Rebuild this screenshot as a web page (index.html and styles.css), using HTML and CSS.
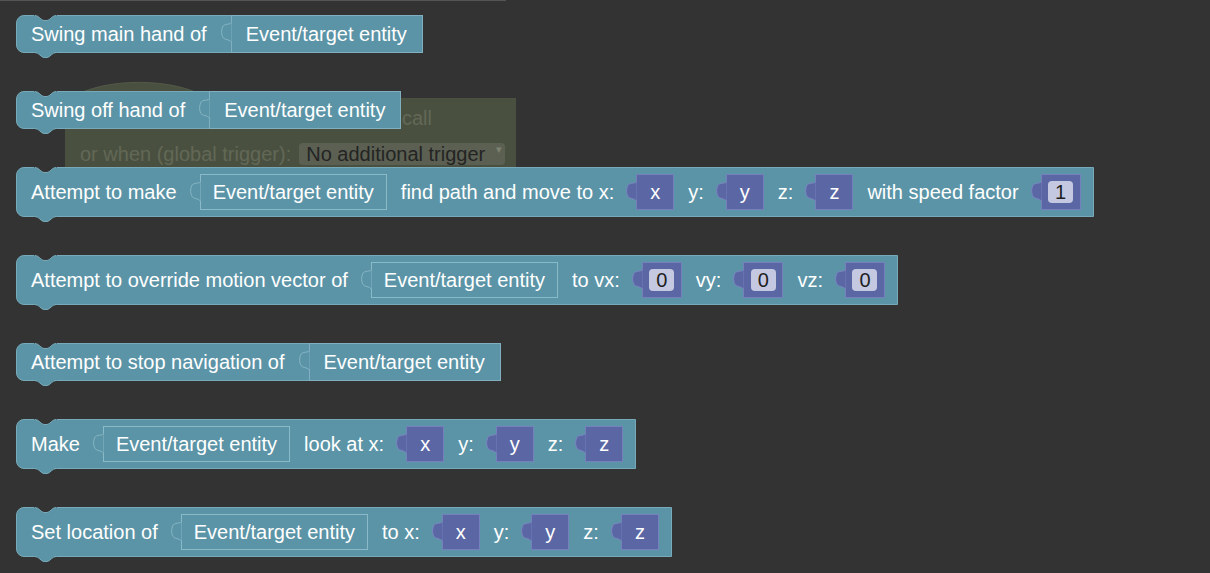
FILE: index.html
```html
<!DOCTYPE html>
<html>
<head>
<meta charset="utf-8">
<link rel="stylesheet" href="styles.css">
</head>
<body>
<div class="workspace">
  <div class="scrollbar"></div>

  <div class="ghost">
    <svg class="ghost-hat" viewBox="0 0 136 18"><path d="M0,17.5 C30,-4 106,-4 136,17.5"/></svg>
    <div class="ghost-row ghost-row1"><span>call</span></div>
    <div class="ghost-row ghost-row2">
      <span>or when (global trigger):</span>
      <span class="dropdown">No additional trigger<span class="arrow">▾</span></span>
    </div>
  </div>

  <div class="stack">
    <div class="block short">
      <svg class="notch" viewBox="0 0 23 7"><path class="cut" d="M0,0 H23 V0.5 H22 C18,0.5 16,5.5 13,5.5 H10 C7,5.5 5,0.5 1,0.5 H0 Z"/><path class="edge" d="M1,0.5 C5,0.5 7,5.5 10,5.5 H13 C16,5.5 18,0.5 22,0.5"/></svg>
      <span class="lbl">Swing main hand of</span>
      <div class="child-flush"><svg class="ctab" viewBox="0 0 12 21"><path d="M11.5,0.5 C11.5,3 4,1 2.5,5 C1,9 1.5,13 3,15.5 C4.5,18 9,17 11.5,20"/></svg><span>Event/target entity</span></div>
      <svg class="ptab" viewBox="0 0 23 7"><path class="fill" d="M0,0 H23 V0.5 H22 C18,0.5 16,5.5 13,5.5 H10 C7,5.5 5,0.5 1,0.5 H0 Z"/><path class="edge" d="M1,0.5 C5,0.5 7,5.5 10,5.5 H13 C16,5.5 18,0.5 22,0.5"/></svg>
    </div>

    <div class="block short">
      <svg class="notch" viewBox="0 0 23 7"><path class="cut" d="M0,0 H23 V0.5 H22 C18,0.5 16,5.5 13,5.5 H10 C7,5.5 5,0.5 1,0.5 H0 Z"/><path class="edge" d="M1,0.5 C5,0.5 7,5.5 10,5.5 H13 C16,5.5 18,0.5 22,0.5"/></svg>
      <span class="lbl">Swing off hand of</span>
      <div class="child-flush"><svg class="ctab" viewBox="0 0 12 21"><path d="M11.5,0.5 C11.5,3 4,1 2.5,5 C1,9 1.5,13 3,15.5 C4.5,18 9,17 11.5,20"/></svg><span>Event/target entity</span></div>
      <svg class="ptab" viewBox="0 0 23 7"><path class="fill" d="M0,0 H23 V0.5 H22 C18,0.5 16,5.5 13,5.5 H10 C7,5.5 5,0.5 1,0.5 H0 Z"/><path class="edge" d="M1,0.5 C5,0.5 7,5.5 10,5.5 H13 C16,5.5 18,0.5 22,0.5"/></svg>
    </div>

    <div class="block tall">
      <svg class="notch" viewBox="0 0 23 7"><path class="cut" d="M0,0 H23 V0.5 H22 C18,0.5 16,5.5 13,5.5 H10 C7,5.5 5,0.5 1,0.5 H0 Z"/><path class="edge" d="M1,0.5 C5,0.5 7,5.5 10,5.5 H13 C16,5.5 18,0.5 22,0.5"/></svg>
      <span class="lbl">Attempt to make</span>
      <div class="slot"><svg class="ctab" viewBox="0 0 12 21"><path d="M11.5,0.5 C11.5,3 4,1 2.5,5 C1,9 1.5,13 3,15.5 C4.5,18 9,17 11.5,20"/></svg><span>Event/target entity</span></div>
      <span class="lbl after">find path and move to x:</span>
      <div class="val"><svg class="ctab" viewBox="0 0 12 21"><path d="M11.5,0.5 C11.5,3 4,1 2.5,5 C1,9 1.5,13 3,15.5 C4.5,18 9,17 11.5,20"/></svg><span>x</span></div>
      <span class="lbl after">y:</span>
      <div class="val"><svg class="ctab" viewBox="0 0 12 21"><path d="M11.5,0.5 C11.5,3 4,1 2.5,5 C1,9 1.5,13 3,15.5 C4.5,18 9,17 11.5,20"/></svg><span>y</span></div>
      <span class="lbl after">z:</span>
      <div class="val"><svg class="ctab" viewBox="0 0 12 21"><path d="M11.5,0.5 C11.5,3 4,1 2.5,5 C1,9 1.5,13 3,15.5 C4.5,18 9,17 11.5,20"/></svg><span>z</span></div>
      <span class="lbl after">with speed factor</span>
      <div class="val num"><svg class="ctab" viewBox="0 0 12 21"><path d="M11.5,0.5 C11.5,3 4,1 2.5,5 C1,9 1.5,13 3,15.5 C4.5,18 9,17 11.5,20"/></svg><span class="field">1</span></div>
      <svg class="ptab" viewBox="0 0 23 7"><path class="fill" d="M0,0 H23 V0.5 H22 C18,0.5 16,5.5 13,5.5 H10 C7,5.5 5,0.5 1,0.5 H0 Z"/><path class="edge" d="M1,0.5 C5,0.5 7,5.5 10,5.5 H13 C16,5.5 18,0.5 22,0.5"/></svg>
    </div>

    <div class="block tall">
      <svg class="notch" viewBox="0 0 23 7"><path class="cut" d="M0,0 H23 V0.5 H22 C18,0.5 16,5.5 13,5.5 H10 C7,5.5 5,0.5 1,0.5 H0 Z"/><path class="edge" d="M1,0.5 C5,0.5 7,5.5 10,5.5 H13 C16,5.5 18,0.5 22,0.5"/></svg>
      <span class="lbl">Attempt to override motion vector of</span>
      <div class="slot"><svg class="ctab" viewBox="0 0 12 21"><path d="M11.5,0.5 C11.5,3 4,1 2.5,5 C1,9 1.5,13 3,15.5 C4.5,18 9,17 11.5,20"/></svg><span>Event/target entity</span></div>
      <span class="lbl after">to vx:</span>
      <div class="val num"><svg class="ctab" viewBox="0 0 12 21"><path d="M11.5,0.5 C11.5,3 4,1 2.5,5 C1,9 1.5,13 3,15.5 C4.5,18 9,17 11.5,20"/></svg><span class="field">0</span></div>
      <span class="lbl after">vy:</span>
      <div class="val num"><svg class="ctab" viewBox="0 0 12 21"><path d="M11.5,0.5 C11.5,3 4,1 2.5,5 C1,9 1.5,13 3,15.5 C4.5,18 9,17 11.5,20"/></svg><span class="field">0</span></div>
      <span class="lbl after">vz:</span>
      <div class="val num"><svg class="ctab" viewBox="0 0 12 21"><path d="M11.5,0.5 C11.5,3 4,1 2.5,5 C1,9 1.5,13 3,15.5 C4.5,18 9,17 11.5,20"/></svg><span class="field">0</span></div>
      <svg class="ptab" viewBox="0 0 23 7"><path class="fill" d="M0,0 H23 V0.5 H22 C18,0.5 16,5.5 13,5.5 H10 C7,5.5 5,0.5 1,0.5 H0 Z"/><path class="edge" d="M1,0.5 C5,0.5 7,5.5 10,5.5 H13 C16,5.5 18,0.5 22,0.5"/></svg>
    </div>

    <div class="block short">
      <svg class="notch" viewBox="0 0 23 7"><path class="cut" d="M0,0 H23 V0.5 H22 C18,0.5 16,5.5 13,5.5 H10 C7,5.5 5,0.5 1,0.5 H0 Z"/><path class="edge" d="M1,0.5 C5,0.5 7,5.5 10,5.5 H13 C16,5.5 18,0.5 22,0.5"/></svg>
      <span class="lbl">Attempt to stop navigation of</span>
      <div class="child-flush"><svg class="ctab" viewBox="0 0 12 21"><path d="M11.5,0.5 C11.5,3 4,1 2.5,5 C1,9 1.5,13 3,15.5 C4.5,18 9,17 11.5,20"/></svg><span>Event/target entity</span></div>
      <svg class="ptab" viewBox="0 0 23 7"><path class="fill" d="M0,0 H23 V0.5 H22 C18,0.5 16,5.5 13,5.5 H10 C7,5.5 5,0.5 1,0.5 H0 Z"/><path class="edge" d="M1,0.5 C5,0.5 7,5.5 10,5.5 H13 C16,5.5 18,0.5 22,0.5"/></svg>
    </div>

    <div class="block tall">
      <svg class="notch" viewBox="0 0 23 7"><path class="cut" d="M0,0 H23 V0.5 H22 C18,0.5 16,5.5 13,5.5 H10 C7,5.5 5,0.5 1,0.5 H0 Z"/><path class="edge" d="M1,0.5 C5,0.5 7,5.5 10,5.5 H13 C16,5.5 18,0.5 22,0.5"/></svg>
      <span class="lbl">Make</span>
      <div class="slot"><svg class="ctab" viewBox="0 0 12 21"><path d="M11.5,0.5 C11.5,3 4,1 2.5,5 C1,9 1.5,13 3,15.5 C4.5,18 9,17 11.5,20"/></svg><span>Event/target entity</span></div>
      <span class="lbl after">look at x:</span>
      <div class="val"><svg class="ctab" viewBox="0 0 12 21"><path d="M11.5,0.5 C11.5,3 4,1 2.5,5 C1,9 1.5,13 3,15.5 C4.5,18 9,17 11.5,20"/></svg><span>x</span></div>
      <span class="lbl after">y:</span>
      <div class="val"><svg class="ctab" viewBox="0 0 12 21"><path d="M11.5,0.5 C11.5,3 4,1 2.5,5 C1,9 1.5,13 3,15.5 C4.5,18 9,17 11.5,20"/></svg><span>y</span></div>
      <span class="lbl after">z:</span>
      <div class="val"><svg class="ctab" viewBox="0 0 12 21"><path d="M11.5,0.5 C11.5,3 4,1 2.5,5 C1,9 1.5,13 3,15.5 C4.5,18 9,17 11.5,20"/></svg><span>z</span></div>
      <svg class="ptab" viewBox="0 0 23 7"><path class="fill" d="M0,0 H23 V0.5 H22 C18,0.5 16,5.5 13,5.5 H10 C7,5.5 5,0.5 1,0.5 H0 Z"/><path class="edge" d="M1,0.5 C5,0.5 7,5.5 10,5.5 H13 C16,5.5 18,0.5 22,0.5"/></svg>
    </div>

    <div class="block tall">
      <svg class="notch" viewBox="0 0 23 7"><path class="cut" d="M0,0 H23 V0.5 H22 C18,0.5 16,5.5 13,5.5 H10 C7,5.5 5,0.5 1,0.5 H0 Z"/><path class="edge" d="M1,0.5 C5,0.5 7,5.5 10,5.5 H13 C16,5.5 18,0.5 22,0.5"/></svg>
      <span class="lbl">Set location of</span>
      <div class="slot"><svg class="ctab" viewBox="0 0 12 21"><path d="M11.5,0.5 C11.5,3 4,1 2.5,5 C1,9 1.5,13 3,15.5 C4.5,18 9,17 11.5,20"/></svg><span>Event/target entity</span></div>
      <span class="lbl after">to x:</span>
      <div class="val"><svg class="ctab" viewBox="0 0 12 21"><path d="M11.5,0.5 C11.5,3 4,1 2.5,5 C1,9 1.5,13 3,15.5 C4.5,18 9,17 11.5,20"/></svg><span>x</span></div>
      <span class="lbl after">y:</span>
      <div class="val"><svg class="ctab" viewBox="0 0 12 21"><path d="M11.5,0.5 C11.5,3 4,1 2.5,5 C1,9 1.5,13 3,15.5 C4.5,18 9,17 11.5,20"/></svg><span>y</span></div>
      <span class="lbl after">z:</span>
      <div class="val"><svg class="ctab" viewBox="0 0 12 21"><path d="M11.5,0.5 C11.5,3 4,1 2.5,5 C1,9 1.5,13 3,15.5 C4.5,18 9,17 11.5,20"/></svg><span>z</span></div>
      <svg class="ptab" viewBox="0 0 23 7"><path class="fill" d="M0,0 H23 V0.5 H22 C18,0.5 16,5.5 13,5.5 H10 C7,5.5 5,0.5 1,0.5 H0 Z"/><path class="edge" d="M1,0.5 C5,0.5 7,5.5 10,5.5 H13 C16,5.5 18,0.5 22,0.5"/></svg>
    </div>
  </div>
</div>
</body>
</html>
```

FILE: styles.css
```css
html, body {
  margin: 0;
  padding: 0;
  background: #333333;
  width: 1210px;
  height: 573px;
  overflow: hidden;
  font-family: "Liberation Sans", Arial, sans-serif;
  font-size: 20px;
}

.workspace {
  position: relative;
  width: 1210px;
  height: 573px;
}

.scrollbar {
  position: absolute;
  top: 0;
  left: 0;
  width: 506px;
  height: 1px;
  background: #555555;
}

/* dimmed block lying underneath */
.ghost {
  position: absolute;
  left: 65px;
  top: 98px;
  width: 451px;
  height: 80px;
  background: #4a5040;
  color: #626856;
}

.ghost-hat {
  position: absolute;
  left: 6px;
  top: -17px;
  width: 136px;
  height: 18px;
  overflow: visible;
}

.ghost-hat path {
  fill: #4a5040;
  stroke: #535a48;
  stroke-width: 1;
}

.ghost-row {
  display: flex;
  align-items: center;
  white-space: nowrap;
}

.ghost-row1 {
  height: 40px;
  padding-left: 337px;
}

.ghost-row2 {
  height: 32px;
  padding-left: 15px;
}

.dropdown {
  display: flex;
  align-items: center;
  height: 22px;
  margin-left: 8px;
  padding: 0 3px 0 7px;
  background: #5b6052;
  border-radius: 4px;
  color: #242424;
}

.dropdown .arrow {
  align-self: flex-start;
  margin-left: 11px;
  font-size: 11px;
  line-height: 12px;
  color: #7c8270;
}

/* block stack */
.stack {
  position: relative;
  display: flex;
  flex-direction: column;
  align-items: flex-start;
  gap: 38px;
  padding: 15px 0 0 16px;
}

.block {
  position: relative;
  display: flex;
  align-items: center;
  box-sizing: border-box;
  background: #5b94a6;
  border: 1px solid #78a9b8;
  border-radius: 8px 0 0 8px;
  padding: 0 12px 0 14px;
  color: #ffffff;
  white-space: nowrap;
}

.block.short {
  height: 38px;
  padding-right: 0;
}

.block.tall {
  height: 50px;
}

.lbl.after {
  margin-left: 14px;
}

.notch, .ptab {
  position: absolute;
  left: 17px;
  width: 23px;
  height: 7px;
  overflow: visible;
}

.notch {
  top: -1px;
}

.ptab {
  top: 100%;
}

.notch .cut {
  fill: #333333;
}

.ptab .fill {
  fill: #5b94a6;
}

.notch .edge, .ptab .edge {
  fill: none;
  stroke: #78a9b8;
  stroke-width: 1;
}

.ctab {
  position: absolute;
  left: -12px;
  top: 6px;
  width: 12px;
  height: 21px;
  overflow: visible;
}

.ctab path {
  fill: #5b94a6;
  stroke: #86b5c3;
  stroke-width: 1;
}

.child-flush {
  position: relative;
  align-self: stretch;
  display: flex;
  align-items: center;
  margin: -1px -1px -1px 24px;
  padding: 0 15px 0 14px;
  background: #5b94a6;
  border: 1px solid #80b0bf;
}

.slot {
  position: relative;
  display: flex;
  align-items: center;
  box-sizing: border-box;
  height: 36px;
  margin-left: 23px;
  padding: 0 12px;
  border: 1px solid #8ab9c7;
}

.val {
  position: relative;
  display: flex;
  align-items: center;
  justify-content: center;
  box-sizing: border-box;
  width: 38px;
  height: 36px;
  margin-left: 22px;
  background: #5b67a5;
  border: 1px solid #7580bd;
}

.val.num {
  width: 40px;
}

.val .ctab path {
  fill: #5b67a5;
  stroke: #7b86c2;
}

.field {
  display: flex;
  align-items: center;
  justify-content: center;
  width: 25px;
  height: 22px;
  border-radius: 4px;
  background: #c5c8e1;
  color: #1e1e1e;
}
```
